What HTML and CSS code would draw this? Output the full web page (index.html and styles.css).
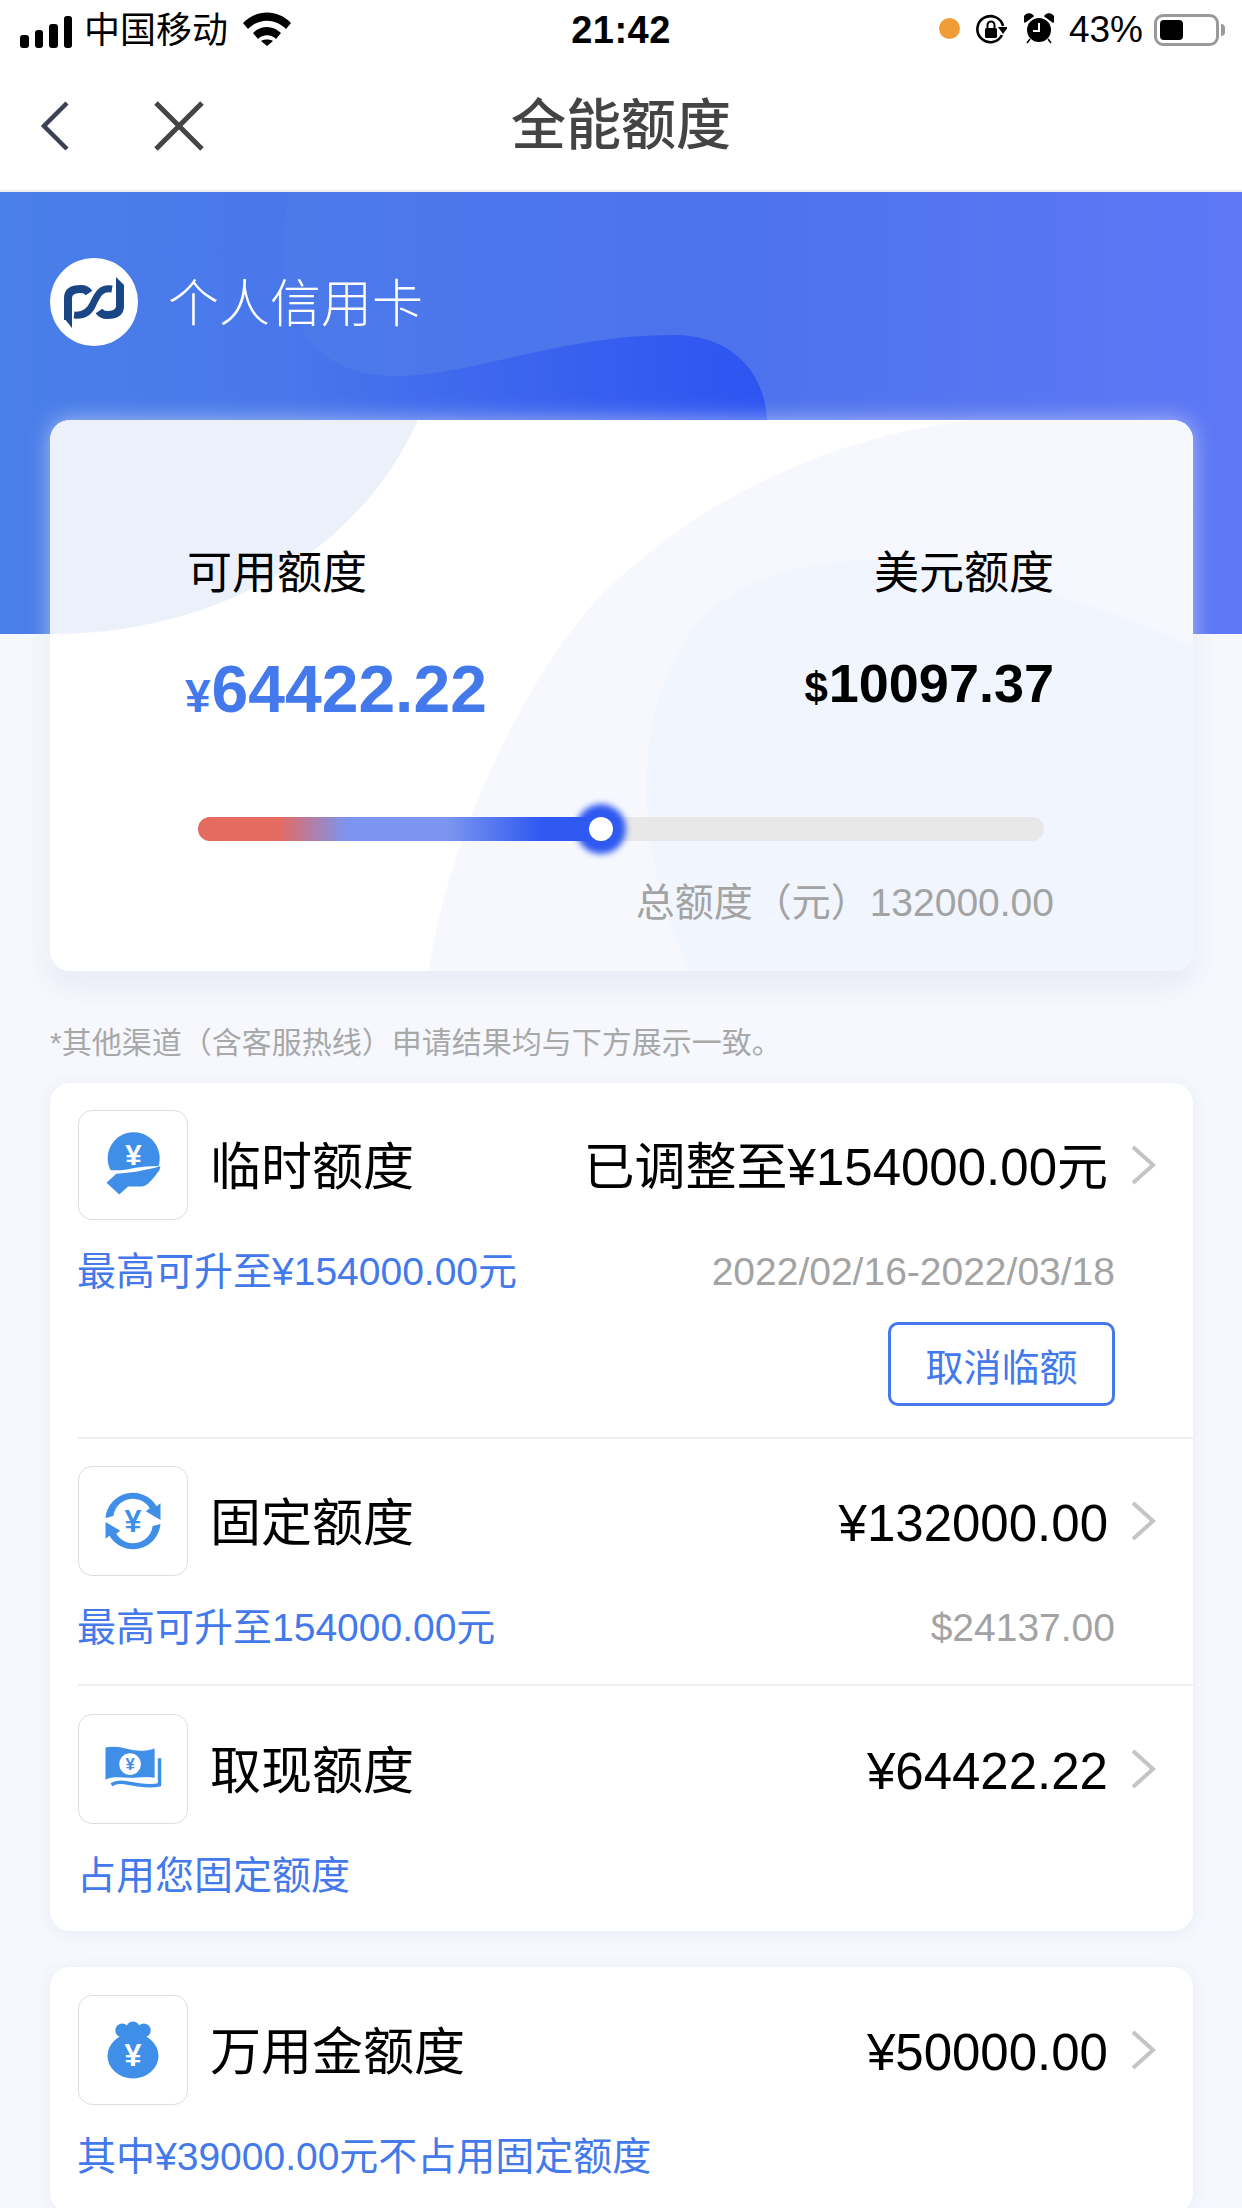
FILE: index.html
```html
<!DOCTYPE html>
<html lang="zh-CN">
<head>
  <meta charset="UTF-8" />
  <title>全能额度</title>
  <link rel="stylesheet" href="styles.css">
</head>
<body>
  <div class="page">
    <div class="statusbar">
      <div class="status-left">
        <div class="signal"><i class="b1"></i><i class="b2"></i><i class="b3"></i><i class="b4"></i></div>
        <span class="carrier">中国移动</span>
        <svg class="wifi" viewBox="0 0 48 34" width="48" height="34"><path d="M0 11C13-3 35-3 48 11l-5 6C32 6 16 6 5 17z"/><path d="M10 21c8-8 20-8 28 0l-5 6c-5-5-13-5-18 0z"/><path d="M18 29c3-2 9-2 12 0l-6 5z"/></svg>
      </div>
      <div class="status-time">21:42</div>
      <div class="status-right">
        <i class="dot"></i>
        <svg class="lock" viewBox="0 0 32 32" width="32" height="32"><path d="M27 21A13 13 0 1 1 28 12" fill="none" stroke="#000" stroke-width="2.6"/><path d="M23 13h10l-5 7z"/><rect x="10" y="14" width="12" height="10" rx="1.5"/><path d="M12.5 14v-3a3.5 3.5 0 0 1 7 0v3" fill="none" stroke="#000" stroke-width="2"/></svg>
        <svg class="alarm" viewBox="0 0 30 32" width="30" height="32"><circle cx="15" cy="17" r="12"/><path d="M1 9a5 5 0 0 1 8-6zM29 9a5 5 0 0 0-8-6zM6 26l-3 4M24 26l3 4" stroke="#000" stroke-width="1.5"/><path d="M15 10v8H9" fill="none" stroke="#fff" stroke-width="2"/></svg>
        <span class="percent">43%</span>
        <div class="battery"><div class="battery-fill"></div></div>
        <i class="battery-nub"></i>
      </div>
    </div>

    <div class="navbar">
      <svg class="nav-back" viewBox="0 0 28 50" width="28" height="50"><path d="M26 2L3 25l23 23" fill="none" stroke="#3a4252" stroke-width="4.5"/></svg>
      <svg class="nav-close" viewBox="0 0 50 50" width="50" height="50"><path d="M2 2l46 46M48 2L2 48" fill="none" stroke="#444" stroke-width="5"/></svg>
      <h1 class="nav-title">全能额度</h1>
    </div>

    <div class="hero">
      <svg class="hero-shape" viewBox="0 0 1242 442" width="1242" height="442">
        <defs>
          <linearGradient id="heroDark" x1="0" y1="0" x2="770" y2="0" gradientUnits="userSpaceOnUse">
            <stop offset="0" stop-color="#2c54f1" stop-opacity="0"/>
            <stop offset="0.38" stop-color="#2c54f1" stop-opacity="0.08"/>
            <stop offset="1" stop-color="#2c54f1"/>
          </linearGradient>
        </defs>
        <path d="M0 0H290C270 80 285 184 396 184C470 184 560 143 673 143C740 143 770 190 767 240L757 442H0Z" fill="url(#heroDark)"/>
      </svg>
      <div class="hero-head">
        <svg class="bank-logo" viewBox="0 0 88 88" width="88" height="88">
          <circle cx="44" cy="44" r="44" fill="#fff"/>
          <g fill="none" stroke="#1b4685">
            <path d="M18 62V40C18 33 24 31 31 31C35 31 37 32 39 35" stroke-width="8"/>
            <path d="M62 31C50 29 47 38 43 46C40 53 34 58 24 57" stroke-width="7"/>
            <path d="M70 28V48C70 55 64 57 57 57C53 57 51 56 49 53" stroke-width="8"/>
          </g>
          <path d="M14 60H22V70Z" fill="#1b4685"/>
          <path d="M66 30V19L74 27V30Z" fill="#1b4685"/>
        </svg>
        <span class="hero-title">个人信用卡</span>
      </div>
    </div>

    <div class="quota-card">
      <svg class="quota-shape" viewBox="0 0 1143 551" width="1143" height="551">
        <path d="M0 0H368C310 130 170 214 0 214Z" fill="#ebf0fb"/>
        <path d="M921 0C760 20 640 90 555 171C470 260 395 430 379 551H1143V0Z" fill="#f6f8fe"/>
        <path d="M640 551C570 400 590 260 660 190C730 130 860 130 940 157C1020 178 1090 200 1143 228V551Z" fill="#f1f5fe"/>
      </svg>
      <div class="quota-body">
        <div class="quota-amounts">
          <div class="quota-col">
            <div class="quota-label">可用额度</div>
            <div class="quota-rmb"><small>¥</small>64422.22</div>
          </div>
          <div class="quota-col quota-col-right">
            <div class="quota-label">美元额度</div>
            <div class="quota-usd"><small>$</small>10097.37</div>
          </div>
        </div>
        <div class="slider">
          <div class="slider-fill"></div>
          <div class="slider-thumb"></div>
        </div>
        <div class="quota-total">总额度（元）132000.00</div>
      </div>
    </div>

    <p class="note">*其他渠道（含客服热线）申请结果均与下方展示一致。</p>

    <div class="list-card">
      <div class="row">
        <div class="row-head">
          <div class="icon-box">
            <svg viewBox="0 0 110 110" width="108" height="108">
              <path d="M32 60A26.5 26.5 0 1 1 81 56C72 56 64 57 56 58C48 60 40 61 32 60Z" fill="#3f8fe8"/>
              <path d="M28 73L38 64C46 63 52 63 58 62C66 60 74 59 83 56L82 60C76 68 70 77 63 77H50L41 85Z" fill="#3f8fe8"/>
              <text x="55.5" y="55" class="yen yen-white" font-size="30">¥</text>
            </svg>
          </div>
          <div class="row-title">临时额度</div>
          <div class="row-value">已调整至¥154000.00元</div>
          <svg class="chevron" viewBox="0 0 28 42" width="28" height="42"><path d="M3 3l20 18L3 39" fill="none" stroke="#c4c4c4" stroke-width="4"/></svg>
        </div>
        <div class="row-sub">
          <span class="sub-blue">最高可升至¥154000.00元</span>
          <span class="sub-grey">2022/02/16-2022/03/18</span>
        </div>
        <div class="row-action"><button class="btn-outline">取消临额</button></div>
      </div>

      <div class="row">
        <div class="row-head">
          <div class="icon-box">
            <svg viewBox="0 0 110 110" width="108" height="108">
              <path d="M27 52A28 28 0 0 1 79 40L83 37V54L68 45L72 42A20 20 0 0 0 35 50Z" fill="#3f8fe8"/>
              <path d="M83 58A28 28 0 0 1 31 70L27 73V56L42 65L38 68A20 20 0 0 0 75 60Z" fill="#3f8fe8"/>
              <text x="55" y="66" class="yen yen-blue" font-size="31">¥</text>
            </svg>
          </div>
          <div class="row-title">固定额度</div>
          <div class="row-value">¥132000.00</div>
          <svg class="chevron" viewBox="0 0 28 42" width="28" height="42"><path d="M3 3l20 18L3 39" fill="none" stroke="#c4c4c4" stroke-width="4"/></svg>
        </div>
        <div class="row-sub">
          <span class="sub-blue">最高可升至154000.00元</span>
          <span class="sub-grey">$24137.00</span>
        </div>
      </div>

      <div class="row row-last row-third">
        <div class="row-head">
          <div class="icon-box">
            <svg viewBox="0 0 110 110" width="108" height="108">
              <path d="M27 33C38 31 47 34 56 36C64 37 71 36 77 34V64C68 62 60 64 51 64C43 64 34 62 27 66Z" fill="#3f8fe8"/>
              <path d="M33 71C41 66 50 70 60 71C67 72 74 73 82 71V44" fill="none" stroke="#3f8fe8" stroke-width="3.5"/>
              <circle cx="52" cy="50" r="11" fill="#fff"/>
              <text x="52" y="56" class="yen yen-blue" font-size="17">¥</text>
            </svg>
          </div>
          <div class="row-title">取现额度</div>
          <div class="row-value">¥64422.22</div>
          <svg class="chevron" viewBox="0 0 28 42" width="28" height="42"><path d="M3 3l20 18L3 39" fill="none" stroke="#c4c4c4" stroke-width="4"/></svg>
        </div>
        <div class="row-sub">
          <span class="sub-blue">占用您固定额度</span>
        </div>
      </div>
    </div>

    <div class="list-card list-card-second">
      <div class="row row-last">
        <div class="row-head">
          <div class="icon-box">
            <svg viewBox="0 0 110 110" width="108" height="108">
              <circle cx="44" cy="35" r="7" fill="#3f8fe8"/><circle cx="55" cy="33" r="7" fill="#3f8fe8"/><circle cx="66" cy="35" r="7" fill="#3f8fe8"/>
              <rect x="42" y="33" width="26" height="12" fill="#3f8fe8"/>
              <ellipse cx="55" cy="61" rx="26" ry="23" fill="#3f8fe8"/>
              <text x="55" y="71" class="yen yen-white" font-size="31">¥</text>
            </svg>
          </div>
          <div class="row-title">万用金额度</div>
          <div class="row-value">¥50000.00</div>
          <svg class="chevron" viewBox="0 0 28 42" width="28" height="42"><path d="M3 3l20 18L3 39" fill="none" stroke="#c4c4c4" stroke-width="4"/></svg>
        </div>
        <div class="row-sub">
          <span class="sub-blue">其中¥39000.00元不占用固定额度</span>
        </div>
      </div>
    </div>
  </div>
</body>
</html>
```

FILE: styles.css
```css
html, body {
  margin: 0;
  padding: 0;
}
body {
  font-family: "Liberation Sans", "Noto Sans CJK SC", sans-serif;
  background: #f6f8fe;
  color: #000;
}
.page {
  width: 1242px;
  height: 2208px;
  overflow: hidden;
  position: relative;
}

/* status bar */
.statusbar {
  height: 60px;
  background: #fff;
  display: flex;
  align-items: center;
  justify-content: space-between;
  padding: 0 17px 0 20px;
  position: relative;
}
.status-left, .status-right {
  display: flex;
  align-items: center;
}
.signal {
  display: flex;
  align-items: flex-end;
  gap: 6px;
  height: 33px;
  margin-top: 3px;
}
.signal i {
  display: block;
  width: 8.5px;
  background: #000;
  border-radius: 3px;
}
.signal .b1 { height: 13px; }
.signal .b2 { height: 18px; }
.signal .b3 { height: 24px; }
.signal .b4 { height: 32px; }
.carrier {
  font-size: 36px;
  line-height: 50px;
  margin: 2px 0 0 12px;
}
.wifi {
  margin-left: 15px;
  margin-top: -3px;
}
.status-time {
  position: absolute;
  left: 0;
  right: 0;
  text-align: center;
  font-size: 38px;
  line-height: 60px;
  font-weight: bold;
  letter-spacing: 0.5px;
}
.status-right {
  position: relative;
}
.dot {
  width: 21px;
  height: 21px;
  border-radius: 50%;
  background: #f29c38;
  margin-top: -3px;
}
.lock {
  margin-left: 15px;
}
.alarm {
  margin-left: 17px;
  margin-top: -2px;
}
.percent {
  font-size: 37px;
  line-height: 50px;
  margin-left: 15px;
}
.battery {
  width: 65px;
  height: 32px;
  box-sizing: border-box;
  border: 3px solid #9a9a9a;
  border-radius: 9px;
  margin-left: 11px;
  padding: 3px;
}
.battery-fill {
  width: 23px;
  height: 20px;
  background: #000;
  border-radius: 4px;
}
.battery-nub {
  width: 4px;
  height: 12px;
  background: #9a9a9a;
  border-radius: 0 4px 4px 0;
  margin-left: 2px;
}

/* nav */
.navbar {
  height: 132px;
  box-sizing: border-box;
  background: #fff;
  border-bottom: 2px solid #eeeeee;
  display: flex;
  align-items: center;
  position: relative;
}
.nav-back {
  margin-left: 41px;
  margin-top: 2px;
}
.nav-close {
  margin-left: 85px;
  margin-top: 2px;
}
.nav-title {
  position: absolute;
  left: 0;
  right: 0;
  margin: 0;
  text-align: center;
  font-size: 55px;
  line-height: 70px;
  font-weight: 500;
  color: #444;
}

/* hero */
.hero {
  height: 442px;
  background: linear-gradient(90deg, #4a7fe9 0%, #4d72ed 60%, #5e78f6 100%);
  position: relative;
  overflow: hidden;
}
.hero-shape {
  position: absolute;
  left: 0;
  top: 0;
}
.hero-head {
  position: relative;
  display: flex;
  align-items: flex-start;
  padding: 66px 0 0 50px;
}
.hero-title {
  font-size: 51px;
  line-height: 88px;
  font-weight: 300;
  color: #fff;
  margin: 3px 0 0 30px;
}

/* quota card */
.quota-card {
  width: 1143px;
  height: 551px;
  margin: -214px 0 0 50px;
  background: #fff;
  border-radius: 20px;
  position: relative;
  box-shadow: 0 0 22px rgba(255, 255, 255, 0.55), 0 12px 26px rgba(50, 70, 130, 0.1);
}
.quota-shape {
  position: absolute;
  left: 0;
  top: 0;
  border-radius: 20px;
}
.quota-body {
  position: relative;
  padding-top: 124px;
}
.quota-amounts {
  display: flex;
  justify-content: space-between;
  padding: 0 139px 0 135px;
}
.quota-col-right {
  text-align: right;
}
.quota-label {
  font-size: 45px;
  line-height: 60px;
  padding-left: 2px;
}
.quota-rmb {
  margin-top: 45px;
  font-size: 66px;
  line-height: 80px;
  font-weight: bold;
  color: #4379ea;
}
.quota-rmb small {
  font-size: 46px;
  margin-right: 1px;
}
.quota-usd {
  margin-top: 39px;
  font-size: 54px;
  line-height: 80px;
  font-weight: bold;
}
.quota-usd small {
  font-size: 42px;
  margin-right: 1px;
}
.slider {
  width: 846px;
  height: 24px;
  margin: 81px 0 0 148px;
  border-radius: 12px;
  background: #e8e8e8;
  position: relative;
}
.slider-fill {
  width: 403px;
  height: 24px;
  border-radius: 12px 0 0 12px;
  background: linear-gradient(90deg, #e56a60 0%, #e56a60 20%, #7b95f0 37%, #7b95f0 62%, #2f59f0 85%);
}
.slider-thumb {
  position: absolute;
  left: 391px;
  top: 0;
  width: 24px;
  height: 24px;
  border-radius: 50%;
  background: #fff;
  box-shadow: 0 0 6px 13px #2f59f0;
}
.quota-total {
  margin-top: 37px;
  padding-right: 139px;
  text-align: right;
  font-size: 39px;
  line-height: 50px;
  color: #a3a3a3;
}

.note {
  margin: 52px 0 20px 50px;
  font-size: 30px;
  line-height: 40px;
  color: #a8a8a8;
}

/* list cards */
.list-card {
  width: 1143px;
  margin-left: 50px;
  background: #fff;
  border-radius: 20px;
  box-shadow: 0 2px 16px rgba(50, 70, 130, 0.07);
}
.list-card-second {
  margin-top: 36px;
}
.row {
  margin-left: 28px;
  padding: 27px 35px 31px 0;
  border-bottom: 2px solid #eeeeee;
}
.row-last {
  border-bottom: none;
  padding-top: 28px;
  padding-bottom: 31px;
}
.row-third {
  padding-bottom: 30px;
}
.row-head {
  display: flex;
  align-items: center;
}
.icon-box {
  width: 110px;
  height: 110px;
  box-sizing: border-box;
  border: 1px solid #dddddd;
  border-radius: 14px;
}
.icon-box svg {
  display: block;
}
.yen {
  font-weight: bold;
  text-anchor: middle;
}
.yen-white { fill: #fff; }
.yen-blue { fill: #3f8fe8; }
.row-title {
  flex: 1;
  margin-left: 22px;
  padding-top: 6px;
  font-size: 51px;
  line-height: 70px;
}
.row-value {
  padding-top: 6px;
  font-size: 51px;
  line-height: 70px;
}
.chevron {
  margin-left: 22px;
}
.row-sub {
  display: flex;
  justify-content: space-between;
  margin-top: 27px;
  padding-right: 43px;
  line-height: 50px;
  margin-left: -1px;
}
.sub-blue {
  font-size: 39px;
  color: #4379ea;
}
.sub-grey {
  font-size: 39px;
  color: #a3a3a3;
}
.row-action {
  display: flex;
  justify-content: flex-end;
  margin-top: 25px;
  padding-right: 43px;
}
.btn-outline {
  width: 227px;
  height: 84px;
  box-sizing: border-box;
  background: #fff;
  border: 3px solid #4379ea;
  border-radius: 10px;
  font-family: inherit;
  font-size: 38px;
  color: #4379ea;
  padding: 0;
}
```
